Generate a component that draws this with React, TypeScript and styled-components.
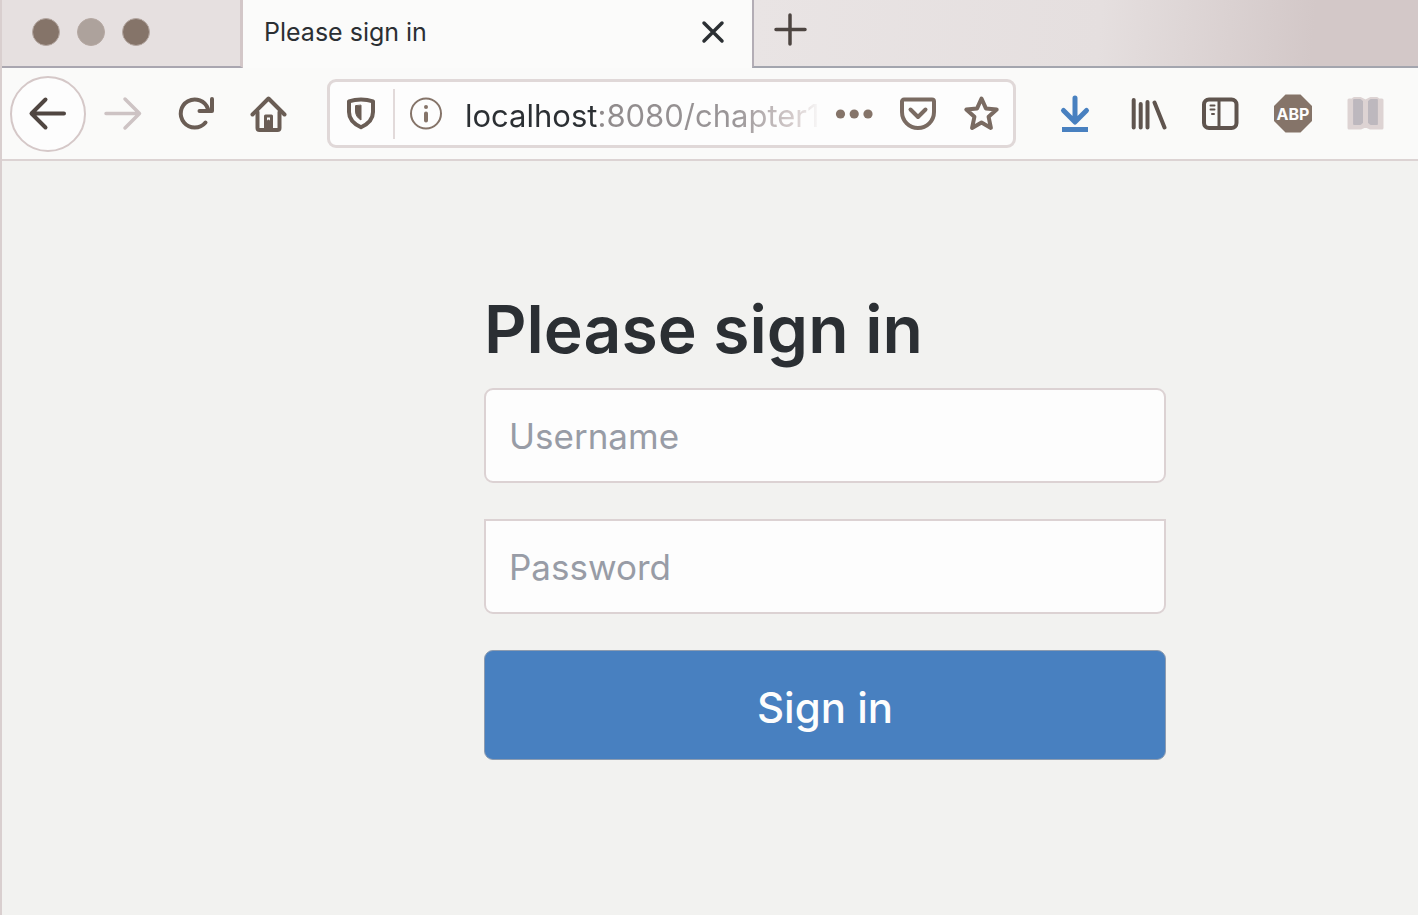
import React from "react";
import styled, { createGlobalStyle } from "styled-components";

const ink = "#2b2f33";
const icon = "#6a5d55";
const brown = "#857469";
const pink = "#d9cfcf";
const blue = "#4880c0";
const sans = `Inter, "Liberation Sans", sans-serif`;

const GlobalStyle = createGlobalStyle`
  *, *::before, *::after { box-sizing: border-box; }
  html, body, #root { height: 100%; }
  body { margin: 0; background: #f2f2f0; font-family: ${sans}; color: ${ink}; }
  button, input { font-family: inherit; color: inherit; }
`;

const Browser = styled.div`
  min-height: 100%;
  display: flex;
  flex-direction: column;
  border-left: 2px solid ${pink};
`;

const TabStrip = styled.header`
  display: flex;
  height: 68px;
`;

const WindowControls = styled.div`
  display: flex;
  align-items: center;
  gap: 17px;
  width: 241px;
  padding-left: 30px;
  padding-bottom: 3px;
  background: #e6e0e0;
  border-right: 3px solid #d3c7c8;
  border-bottom: 2px solid #a9a6b0;
`;

const WindowDot = styled.button<{ $color: string }>`
  width: 28px;
  height: 28px;
  padding: 0;
  border: 1px solid #b5a8a2;
  border-radius: 50%;
  background: ${(p) => p.$color};
`;

const Tab = styled.div`
  display: flex;
  align-items: center;
  justify-content: space-between;
  width: 509px;
  padding: 0 25px 4px 21px;
  background: #fbfbfa;
`;

const TabTitle = styled.span`
  font-size: 25px;
  line-height: 32px;
`;

const PlainButton = styled.button`
  display: flex;
  align-items: center;
  justify-content: center;
  flex: none;
  padding: 0;
  border: 0;
  background: none;
`;

const StripRest = styled.div`
  flex: 1;
  display: flex;
  align-items: center;
  padding: 0 0 6px 18px;
  border-left: 2px solid #b3adb5;
  border-bottom: 2px solid #a3a5ae;
  background: linear-gradient(95deg, #e9e4e4 0%, #e5dfdf 52%, #d3c8c8 84%);
`;

const Toolbar = styled.nav`
  display: flex;
  align-items: center;
  gap: 1px;
  height: 93px;
  padding: 0 16px 0 8px;
  background: #fafaf9;
  border-bottom: 2px solid #dcd3d3;
`;

const ToolButton = styled(PlainButton)`
  width: 72px;
  height: 72px;
`;

const BackButton = styled(PlainButton)`
  width: 76px;
  height: 76px;
  border: 2px solid #d5c8c8;
  border-radius: 50%;
  background: #fdfdfd;
`;

const AddressBar = styled.div`
  flex: 1;
  min-width: 0;
  display: flex;
  align-items: center;
  height: 69px;
  margin: 0 21px;
  padding: 0 11px 0 15px;
  border: 3px solid #e0d8d8;
  border-radius: 9px;
  background: #fdfdfd;
`;

const Divider = styled.span`
  width: 2px;
  height: 50px;
  margin: 0 14px 0 16px;
  background: #e2dada;
`;

const Address = styled.input`
  flex: 1;
  min-width: 0;
  height: 48px;
  margin: 4px 0 0 22px;
  padding: 0;
  border: 0;
  outline: 0;
  font-size: 31px;
  color: transparent;
  -webkit-text-fill-color: transparent;
  background: linear-gradient(
    to right,
    ${ink} 133px,
    #8f8a8b 133px,
    #9a9698 270px,
    #d5cccc 330px,
    transparent 356px
  );
  -webkit-background-clip: text;
  background-clip: text;
`;

const AddressActions = styled.div`
  display: flex;
  gap: 24px;
  margin-left: 17px;
`;

const Page = styled.main`
  flex: 1;
  display: grid;
  grid-template-columns: 482fr minmax(0, 682px) 252fr;
  align-content: start;
  padding: 125px 0 48px;
`;

const SignInForm = styled.form`
  grid-column: 2;
  display: flex;
  flex-direction: column;
  gap: 36px;
`;

const Intro = styled.div`
  display: flex;
  flex-direction: column;
  gap: 16px;
`;

const Title = styled.h1`
  margin: 0;
  font-size: 66px;
  font-weight: 600;
  line-height: 86px;
  white-space: nowrap;
`;

const Field = styled.input<{ $squareTop?: boolean }>`
  width: 100%;
  height: 95px;
  padding: 0 23px;
  border: 2px solid #dcd2d3;
  border-radius: ${(p) => (p.$squareTop ? "0 0 9px 9px" : "9px")};
  background: #fdfdfd;
  font-size: 35px;
  &::placeholder {
    color: #989ca6;
    opacity: 1;
  }
`;

const SubmitButton = styled.button`
  height: 110px;
  padding: 4px 0 0;
  border: 1px solid #8d9cb0;
  border-radius: 9px;
  background: ${blue};
  color: #fdfdfd;
  font-size: 42px;
  font-weight: 500;
`;

type IconProps = {
  children: React.ReactNode;
  width?: number;
  color?: string;
  weight?: number;
};

const Icon = ({ children, width = 40, color = icon, weight = 4 }: IconProps) => (
  <svg
    width={width}
    height={40}
    viewBox={`0 0 ${width} 40`}
    fill="none"
    stroke={color}
    strokeWidth={weight}
    strokeLinecap="round"
    strokeLinejoin="round"
    aria-hidden="true"
  >
    {children}
  </svg>
);

export default function App() {
  return (
    <>
      <GlobalStyle />
      <Browser>
        <TabStrip>
          <WindowControls>
            <WindowDot $color={brown} aria-label="Close window" />
            <WindowDot $color="#ada29c" aria-label="Minimize window" />
            <WindowDot $color={brown} aria-label="Zoom window" />
          </WindowControls>
          <Tab>
            <TabTitle>Please sign in</TabTitle>
            <PlainButton aria-label="Close tab">
              <Icon width={28} color={ink} weight={3.5}>
                <path d="M5 11l18 18M23 11L5 29" />
              </Icon>
            </PlainButton>
          </Tab>
          <StripRest>
            <PlainButton aria-label="New tab">
              <Icon color="#4d4541" weight={3.5}>
                <path d="M18 5v29M4 19.500h29" />
              </Icon>
            </PlainButton>
          </StripRest>
        </TabStrip>

        <Toolbar>
          <BackButton aria-label="Back">
            <Icon color="#504641">
              <path d="M36 19.500H4M17.500 5.500L3.500 19.500l14 14" />
            </Icon>
          </BackButton>
          <ToolButton aria-label="Forward">
            <Icon color="#cdc3c4" weight={3.5}>
              <path d="M3 19.500h33M22 5l14.500 14.500L22 34" />
            </Icon>
          </ToolButton>
          <ToolButton aria-label="Reload">
            <Icon>
              <path d="M29.500 28.500A14 14 0 1 1 32 15" />
              <path d="M36 5V17H23.500" />
            </Icon>
          </ToolButton>
          <ToolButton aria-label="Home">
            <Icon>
              <path d="M3.500 20.500l16-16 16 16" />
              <path d="M8.500 18v16a2 2 0 0 0 2 2h18a2 2 0 0 0 2-2V18" />
              <path d="M16.500 35V22h6v13" strokeWidth={3} />
              <path d="M19.500 27v9" strokeWidth={3} />
            </Icon>
          </ToolButton>

          <AddressBar>
            <PlainButton aria-label="Tracking protection">
              <Icon width={32}>
                <path d="M16 5.500c4 0 8 .5 12 1.800V18c0 7-5 12-12 15.300C9 30 4 25 4 18V7.300c4-1.300 8-1.800 12-1.800z" />
                <path d="M16 11.500v14.500c-3.500-2-5.500-5-5.500-9v-5z" fill={icon} strokeWidth={1} />
              </Icon>
            </PlainButton>
            <Divider />
            <PlainButton aria-label="Site information">
              <Icon width={34} color={brown}>
                <circle cx="17" cy="19.500" r="15" strokeWidth={2} />
                <path d="M17 13v.1M17 19.500v7" strokeWidth={4} />
              </Icon>
            </PlainButton>
            <Address aria-label="Address" defaultValue="localhost:8080/chapter1" spellCheck={false} />
            <AddressActions>
              <PlainButton aria-label="Page actions">
                <Icon color="none">
                  <g fill={brown}>
                    <circle cx="6.500" cy="20" r="4.600" />
                    <circle cx="20.200" cy="20" r="4.600" />
                    <circle cx="34" cy="20" r="4.600" />
                  </g>
                </Icon>
              </PlainButton>
              <PlainButton aria-label="Save to Pocket">
                <Icon color="#7a6b62">
                  <path d="M6 5.500h28a2 2 0 0 1 2 2V18a16 16 0 0 1-32 0V7.500a2 2 0 0 1 2-2z" />
                  <path d="M12.500 15.500L20 23l7.500-7.500" />
                </Icon>
              </PlainButton>
              <PlainButton aria-label="Bookmark this page">
                <Icon color="#7a6b62">
                  <path d="M19.500 4.500l4.400 9.900 10.800 1.200-8.100 7.200 2.300 11.100-9.400-5.400-9.400 5.400 2.300-11.100-8.100-7.200 10.800-1.200z" />
                </Icon>
              </PlainButton>
            </AddressActions>
          </AddressBar>

          <ToolButton aria-label="Downloads">
            <Icon color={blue} weight={5}>
              <path d="M21 4v22M9.500 16.500L21 28l11.500-11.500" />
              <path d="M8 35.500h26" strokeLinecap="butt" />
            </Icon>
          </ToolButton>
          <ToolButton aria-label="Library">
            <Icon color="#5f544e">
              <path d="M6.700 6v27.500M13.700 10v23.500M20.500 8v25.500M27.500 8.500l10 25" />
            </Icon>
          </ToolButton>
          <ToolButton aria-label="Sidebars">
            <Icon color="#5f544e">
              <rect x="4" y="5.500" width="32.500" height="28.500" rx="5" />
              <path d="M19 6v28" strokeWidth={3} />
              <path d="M10.500 11.500h4M10.500 15.500h4M12 20h2" strokeWidth={2} />
            </Icon>
          </ToolButton>
          <ToolButton aria-label="Adblock Plus">
            <Icon color="none">
              <path d="M12.500 .5h15L39 12v15L27.500 38.500h-15L1 27V12z" fill={brown} />
              <text
                x="20"
                y="26"
                textAnchor="middle"
                fill="#fdfdfd"
                fontFamily={sans}
                fontSize="16"
                fontWeight="700"
              >
                ABP
              </text>
            </Icon>
          </ToolButton>
          <ToolButton aria-label="Reader view">
            <Icon color="#ddd3d3" weight={3}>
              <path
                d="M3 6h3.500l1.500-1.500h6.500l5 2.500 5-2.500h6.500l1.500 1.500H36v28H24l-4.500-2L15 34H3z"
                fill="#ddd3d3"
              />
              <path
                d="M8 5.500h6.500l2 1.500v22l-2 1.500H8zM31 5.500h-6.500l-2 1.500v22l2 1.500H31z"
                fill="#bdb8be"
                stroke="#bdb8be"
                strokeWidth={1}
              />
            </Icon>
          </ToolButton>
        </Toolbar>

        <Page>
          <SignInForm onSubmit={(e) => e.preventDefault()}>
            <Intro>
              <Title>Please sign in</Title>
              <Field type="text" placeholder="Username" aria-label="Username" />
            </Intro>
            <Field type="password" placeholder="Password" aria-label="Password" $squareTop />
            <SubmitButton type="submit">Sign in</SubmitButton>
          </SignInForm>
        </Page>
      </Browser>
    </>
  );
}
